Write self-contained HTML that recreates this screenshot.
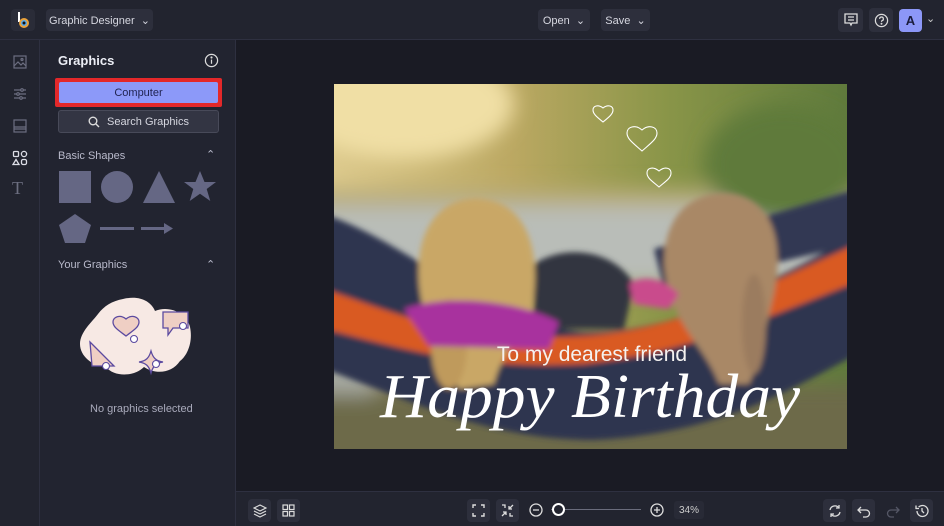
<!DOCTYPE html>
<html><head><meta charset="utf-8"><style>
*{box-sizing:border-box;margin:0;padding:0}
body{width:944px;height:526px;overflow:hidden;background:#1a1b24;font-family:"Liberation Sans",sans-serif;position:relative;color:#d8d9e3}
.top{position:absolute;left:0;top:0;width:944px;height:40px;background:#22242f;border-bottom:1px solid #2e3040}
.btn{position:absolute;background:#2d2f3c;border-radius:4px;font-size:11px;color:#d6d7e0;display:flex;align-items:center;justify-content:center}
.rail{position:absolute;left:0;top:40px;width:40px;height:486px;background:#22242f;border-right:1px solid #2e3040}
.panel{position:absolute;left:40px;top:40px;width:196px;height:486px;background:#222430;border-right:1px solid #2e3040}
.bottom{position:absolute;left:236px;top:491px;width:708px;height:35px;background:#22242f;border-top:1px solid #2e3040}
.ib{position:absolute;width:23px;height:23px;background:#2d2f3c;border-radius:4px;display:flex;align-items:center;justify-content:center}
.lbl{position:absolute;font-size:11px;color:#b9bacb}
</style></head><body>
<div class="top">
 <div class="ib" style="left:11px;top:9px;width:24px;height:22px;background:#2a2c38"><svg width="16" height="18" viewBox="0 0 16 18"><rect x="3" y="1" width="2" height="10" fill="#fff"/><circle cx="9" cy="12" r="5" fill="#e9a23b"/><circle cx="9" cy="12" r="3" fill="#5aa9e6"/><circle cx="9" cy="12" r="1.5" fill="#111"/></svg></div>
 <div class="btn" style="left:46px;top:9px;width:107px;height:22px">Graphic Designer&nbsp;&nbsp;⌄</div>
 <div class="btn" style="left:538px;top:9px;width:52px;height:22px">Open&nbsp;&nbsp;⌄</div>
 <div class="btn" style="left:601px;top:9px;width:49px;height:22px">Save&nbsp;&nbsp;⌄</div>
 <div class="ib" style="left:838px;top:8px;width:25px;height:24px"><svg width="14" height="14" viewBox="0 0 14 14" fill="none" stroke="#ddd" stroke-width="1.3"><path d="M1 1h12v9H8l-1 2-1-2H1z"/><path d="M4 4h6M4 7h6"/></svg></div>
 <div class="ib" style="left:869px;top:8px;width:24px;height:24px"><svg width="15" height="15" viewBox="0 0 16 16" fill="none" stroke="#ddd" stroke-width="1.3"><circle cx="8" cy="8" r="6.5"/><path d="M6 6.3a2 2 0 1 1 2.5 1.9c-.5.2-.5.6-.5 1.3"/><circle cx="8" cy="11.5" r=".4" fill="#ddd"/></svg></div>
 <div style="position:absolute;left:899px;top:9px;width:23px;height:23px;background:#8c97f7;border-radius:4px;color:#1a1c3c;font-weight:bold;font-size:13px;display:flex;align-items:center;justify-content:center">A</div>
 <div style="position:absolute;left:926px;top:12px;font-size:11px;color:#ccc">⌄</div>
</div>
<div class="rail">
 <svg style="position:absolute;left:13px;top:15px" width="14" height="14" viewBox="0 0 14 14" fill="none" stroke="#6c6e80" stroke-width="1.2"><rect x="1" y="1" width="12" height="12"/><path d="M1 11l4-4 3 3 2-2 3 3"/><circle cx="9" cy="4.5" r="1"/></svg>
 <svg style="position:absolute;left:13px;top:47px" width="14" height="14" viewBox="0 0 14 14" fill="none" stroke="#6c6e80" stroke-width="1.2"><path d="M1 3h12M1 7h12M1 11h12"/><circle cx="9" cy="3" r="1.3" fill="#22242f"/><circle cx="5" cy="7" r="1.3" fill="#22242f"/><circle cx="8" cy="11" r="1.3" fill="#22242f"/></svg>
 <svg style="position:absolute;left:13px;top:79px" width="14" height="14" viewBox="0 0 14 14" fill="none" stroke="#6c6e80" stroke-width="1.2"><rect x="1" y="1" width="12" height="12"/><path d="M1 8h12M1 10h12"/></svg>
 <svg style="position:absolute;left:12px;top:110px" width="16" height="16" viewBox="0 0 16 16" fill="none" stroke="#dcdde6" stroke-width="1.3"><rect x="1.5" y="1.5" width="5" height="5" rx="1"/><circle cx="12" cy="4" r="2.6"/><path d="M4 9.5l3 5H1z"/><rect x="9.5" y="9.5" width="5" height="5" rx="1.5"/></svg>
 <div style="position:absolute;left:12px;top:138px;font-family:'Liberation Serif',serif;font-size:18px;color:#6c6e80">T</div>
</div>
<div class="panel">
 <div style="position:absolute;left:18px;top:13px;font-size:13px;font-weight:bold;color:#eceef5">Graphics</div>
 <svg style="position:absolute;left:164px;top:13px" width="15" height="15" viewBox="0 0 16 16" fill="none" stroke="#ddd" stroke-width="1.3"><circle cx="8" cy="8" r="6.5"/><path d="M8 7v4.5"/><circle cx="8" cy="4.8" r=".5" fill="#ddd"/></svg>
 <div style="position:absolute;left:15px;top:38px;width:167px;height:29px;background:#e3282a;border-radius:2px"></div>
 <div style="position:absolute;left:19px;top:42px;width:159px;height:21px;background:#8c99f9;border-radius:2px;color:#1f2250;font-size:11px;display:flex;align-items:center;justify-content:center">Computer</div>
 <div style="position:absolute;left:18px;top:70px;width:161px;height:23px;background:#333543;border:1px solid #484a59;border-radius:3px;font-size:11px;color:#d6d7e0;display:flex;align-items:center;justify-content:center"><svg width="12" height="12" viewBox="0 0 12 12" fill="none" stroke="#ddd" stroke-width="1.4" style="margin-right:7px"><circle cx="5" cy="5" r="3.8"/><path d="M8 8l3 3"/></svg>Search Graphics</div>
 <div class="lbl" style="left:18px;top:110px">Basic Shapes</div>
 <div class="lbl" style="left:166px;top:108px">⌃</div>
 <svg style="position:absolute;left:18px;top:130px" width="160" height="76" viewBox="0 0 160 76" fill="#656784"><rect x="1" y="1" width="32" height="32"/><circle cx="59" cy="17" r="16"/><path d="M101 1l16 32H85z"/><path d="M142 1l4.5 11h11.5l-9.3 7 3.6 12-10.3-7.3-10.3 7.3 3.6-12-9.3-7h11.5z"/><path d="M17 44l16 11-6 18H7L1 55z"/><rect x="42" y="57" width="34" height="3"/><rect x="83" y="57" width="25" height="3"/><path d="M106 53l9 5.5-9 5.5z"/></svg>
 <div class="lbl" style="left:18px;top:219px">Your Graphics</div>
 <div class="lbl" style="left:166px;top:218px">⌃</div>
 <svg style="position:absolute;left:38px;top:256px" width="120" height="95" viewBox="0 0 120 95">
  <path d="M45 3c16-4 28 2 32 12 14-6 32 2 35 16 3 14-2 28-10 34-8 12-24 14-36 6-10 10-30 10-38 0C14 70 2 60 2 48 2 36 14 26 20 18 26 10 34 5 45 3z" fill="#f7e9e4"/>
  <g fill="#efcfc4" stroke="#5b4aa0" stroke-width="1.3"><path d="M48 40c-8-6-13-9-13-14 0-5 7-8 13-3 6-5 13-2 13 3 0 5-5 8-13 14z"/><path d="M85 16h25v16h-15l-5 7v-7h-5z"/><path d="M12 46l24 24H14z"/><path d="M73 55c2 7 5 10 12 11-7 1-10 4-12 11-2-7-5-10-12-11 7-1 10-4 12-11z"/></g>
  <g fill="#fff" stroke="#5b4aa0" stroke-width="1.1"><circle cx="56" cy="43" r="3.5"/><circle cx="105" cy="30" r="3.5"/><circle cx="28" cy="70" r="3.5"/><circle cx="78" cy="68" r="3.5"/></g>
 </svg>
 <div class="lbl" style="left:50px;top:363px;color:#a9aabb">No graphics selected</div>
</div>
<svg style="position:absolute;left:334px;top:84px" width="513" height="365" viewBox="0 0 513 365">
 <defs>
  <filter id="b" x="-30%" y="-30%" width="160%" height="160%"><feGaussianBlur stdDeviation="10"/></filter>
  <filter id="b2" x="-10%" y="-10%" width="120%" height="120%"><feGaussianBlur stdDeviation="3"/></filter>
  <clipPath id="c"><rect width="513" height="365"/></clipPath>
  <linearGradient id="sky" x1="0" y1="0" x2="1" y2="0"><stop offset="0" stop-color="#dcc98c"/><stop offset=".35" stop-color="#bba862"/><stop offset=".65" stop-color="#899548"/><stop offset="1" stop-color="#5f7a3c"/></linearGradient>
 </defs>
 <g clip-path="url(#c)">
 <rect width="513" height="365" fill="url(#sky)"/>
 <g filter="url(#b)">
  <ellipse cx="70" cy="20" rx="110" ry="55" fill="#f0dfa5"/>
  <rect x="-40" y="105" width="600" height="18" fill="#b8ab78"/>
  <rect x="-40" y="122" width="600" height="80" fill="#b9bdb8"/>
  <rect x="-40" y="300" width="600" height="100" fill="#6d6a48"/>
  <ellipse cx="450" cy="80" rx="80" ry="60" fill="#5e7a3a"/>
  <rect x="-40" y="200" width="80" height="110" fill="#a7aaa2"/>
 </g>
 <g filter="url(#b2)">
  <path d="M-10 130 C80 160 150 240 250 248 C350 250 450 190 523 150 L523 270 C450 310 380 350 260 356 C150 356 60 310 -10 285z" fill="#2f3550"/>
  <path d="M-10 205 C60 228 120 258 250 252 C350 246 440 196 523 160 L523 198 C440 230 360 268 250 280 C130 286 60 262 -10 245z" fill="#d95a24"/>
  <path d="M320 165 L523 105 L523 160 L330 205z" fill="#323852"/>
  <path d="M200 180 C230 160 280 165 300 200 L290 245 L200 245z" fill="#33353f"/>
  <path d="M85 200 C80 130 120 110 150 115 C190 120 205 160 200 210 C195 250 170 260 160 300 L125 305 C110 270 90 250 85 200z" fill="#c9a766"/>
  <ellipse cx="115" cy="260" rx="18" ry="45" fill="#bf9a5c"/>
  <path d="M70 225 C110 210 180 215 225 238 L215 265 L95 262z" fill="#a8309e"/>
  <path d="M330 180 C330 120 370 105 400 110 C440 118 450 160 440 210 C430 250 425 280 415 300 L385 300 C370 260 335 240 330 180z" fill="#a98866"/>
  <ellipse cx="420" cy="240" rx="12" ry="50" fill="#9b7c5e"/>
  <path d="M295 200 C310 190 330 195 345 210 L335 225 L300 220z" fill="#c94c8c"/>
 </g>
 </g>
 <g fill="none" stroke="#fff" stroke-width="1.1">
  <path d="M269 38c-6-5-10-8-10-12 0-4 5-6 10-2 5-4 10-2 10 2 0 4-4 7-10 12z"/>
  <path d="M308 67c-9-8-15-12-15-18 0-6 8-9 15-3 7-6 15-3 15 3 0 6-6 10-15 18z"/>
  <path d="M325 103c-7-6-12-9-12-14 0-5 6-7 12-2 6-5 12-3 12 2 0 5-5 8-12 14z"/>
 </g>
 <text x="258" y="277" text-anchor="middle" font-family="Liberation Sans,sans-serif" font-size="21" fill="#f4f2f0">To my dearest friend</text>
 <text x="256" y="333" text-anchor="middle" font-family="Liberation Serif,serif" font-style="italic" font-size="62" fill="#fff" textLength="420" lengthAdjust="spacingAndGlyphs">Happy Birthday</text>
</svg>
<div class="bottom">
 <div class="ib" style="left:12px;top:7px"><svg width="14" height="14" viewBox="0 0 14 14" fill="none" stroke="#ddd" stroke-width="1.2"><path d="M7 1l6 3-6 3-6-3z"/><path d="M1 7l6 3 6-3M1 10l6 3 6-3"/></svg></div>
 <div class="ib" style="left:41px;top:7px"><svg width="13" height="13" viewBox="0 0 13 13" fill="none" stroke="#ddd" stroke-width="1.2"><rect x="1" y="1" width="4.5" height="4.5"/><rect x="7.5" y="1" width="4.5" height="4.5"/><rect x="1" y="7.5" width="4.5" height="4.5"/><rect x="7.5" y="7.5" width="4.5" height="4.5"/></svg></div>
 <div class="ib" style="left:231px;top:7px"><svg width="13" height="13" viewBox="0 0 13 13" fill="none" stroke="#ddd" stroke-width="1.4"><path d="M1 4V1h3M9 1h3v3M12 9v3H9M4 12H1V9"/></svg></div>
 <div class="ib" style="left:260px;top:7px"><svg width="13" height="13" viewBox="0 0 13 13" fill="none" stroke="#ddd" stroke-width="1.3"><path d="M1 1h3v3M12 1L8 5M8 2v3h3M1 12l4-4M2 8h3v3M12 12H9V9"/></svg></div>
 <svg style="position:absolute;left:293px;top:11px" width="14" height="14" viewBox="0 0 14 14" fill="none" stroke="#ddd" stroke-width="1.3"><circle cx="7" cy="7" r="6"/><path d="M4 7h6"/></svg>
 <div style="position:absolute;left:315px;top:17px;width:90px;height:1px;background:#6a6c7c"></div>
 <div style="position:absolute;left:316px;top:11px;width:13px;height:13px;border:2px solid #fff;border-radius:50%;background:#22242f"></div>
 <svg style="position:absolute;left:414px;top:11px" width="14" height="14" viewBox="0 0 14 14" fill="none" stroke="#ddd" stroke-width="1.3"><circle cx="7" cy="7" r="6"/><path d="M4 7h6M7 4v6"/></svg>
 <div style="position:absolute;left:438px;top:9px;width:30px;height:18px;background:#282a36;border-radius:3px;font-size:10px;color:#ccc;display:flex;align-items:center;justify-content:center">34%</div>
 <div class="ib" style="left:587px;top:7px"><svg width="14" height="14" viewBox="0 0 14 14" fill="none" stroke="#ddd" stroke-width="1.3"><path d="M2 6a5 5 0 0 1 9-2M12 8a5 5 0 0 1-9 2"/><path d="M11 1v3H8M3 13v-3h3"/></svg></div>
 <div class="ib" style="left:616px;top:7px"><svg width="14" height="14" viewBox="0 0 14 14" fill="none" stroke="#ddd" stroke-width="1.3"><path d="M4 3L1 6l3 3M1 6h8a3.5 3.5 0 0 1 0 7H6"/></svg></div>
 <div class="ib" style="left:645px;top:7px;background:none"><svg width="14" height="14" viewBox="0 0 14 14" fill="none" stroke="#555766" stroke-width="1.3"><path d="M10 3l3 3-3 3M13 6H5a3.5 3.5 0 0 0 0 7h3"/></svg></div>
 <div class="ib" style="left:674px;top:7px"><svg width="14" height="14" viewBox="0 0 14 14" fill="none" stroke="#ddd" stroke-width="1.3"><path d="M2 7a5.5 5.5 0 1 0 1.6-3.9"/><path d="M1 1.5v3h3M7 4v3l2 2"/></svg></div>
</div>
</body></html>
